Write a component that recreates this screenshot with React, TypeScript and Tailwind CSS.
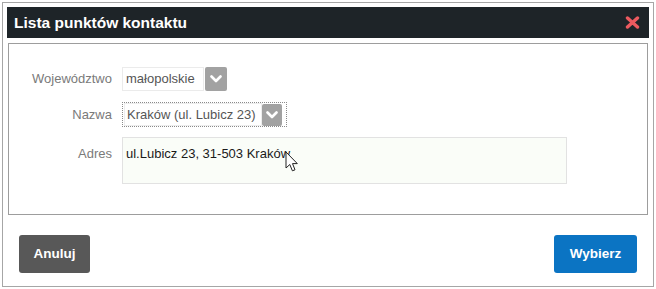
import React from 'react';

const Chevron: React.FC = () => (
  <svg width="12" height="8" viewBox="0 0 12 8" className="block">
    <path d="M1.5 1.5 L6 6 L10.5 1.5" fill="none" stroke="#ffffff" strokeWidth="2.6" strokeLinecap="round" strokeLinejoin="round" />
  </svg>
);

const DropButton: React.FC<{ className?: string }> = ({ className = '' }) => (
  <div className={`flex items-center justify-center bg-[#a2a2a2] rounded-[2px] ${className}`}>
    <Chevron />
  </div>
);

const Cursor: React.FC = () => (
  <svg width="14" height="22" viewBox="0 0 14 22" className="absolute left-[162px] top-[13px]">
    <path d="M1 1 L1 17 L4.8 13.5 L7.4 19.8 L10 18.8 L7.5 12.6 L12.3 12.6 Z" fill="#ffffff" stroke="#222222" strokeWidth="1" strokeLinejoin="round" />
  </svg>
);

const App: React.FC = () => {
  return (
    <div className="w-[656px] h-[289px] bg-white p-[2px] font-['Liberation_Sans',Arial,sans-serif]">
      <div className="h-full border border-[#a6a6a6] p-[4px] flex flex-col">
        {/* header */}
        <div className="h-[31px] bg-[#1e2428] flex items-center justify-between pl-[7px] pr-[9px]">
          <span className="text-white font-bold text-[15.5px] leading-none">Lista punktów kontaktu</span>
          <svg width="15" height="13" viewBox="0 0 15 13">
            <path d="M2.5 2 L12.5 11 M12.5 2 L2.5 11" stroke="#ec5a5f" strokeWidth="3.4" strokeLinecap="round" />
          </svg>
        </div>

        {/* body */}
        <div className="mt-[5px] mx-[1px] h-[172px] border border-[#9d9d9d] pt-[23px] text-[13px]">
          <div className="grid grid-cols-[103px_1fr] gap-x-[10px] items-center">
            <span className="text-right text-[#7a7a7a]">Województwo</span>
            <div className="flex h-[24px] items-stretch">
              <div className="w-[82px] border border-[#ebebeb] pl-[3px] flex items-center text-[#555555]">małopolskie</div>
              <DropButton className="w-[22px] ml-[1px]" />
            </div>

            <span className="mt-[11px] text-right text-[#7a7a7a]">Nazwa</span>
            <div className="mt-[11px] flex">
              <div className="h-[25px] w-[165px] border border-dotted border-[#8a8a8a] flex items-center pl-[1px] pr-[4px]">
                <div className="flex-1 h-[23px] border border-[#ededed] pl-[2px] flex items-center text-[#555555]">Kraków (ul. Lubicz 23)</div>
                <DropButton className="w-[20px] h-[22px]" />
              </div>
            </div>

            <span className="mt-[10px] self-start pt-[7px] text-right text-[#7a7a7a]">Adres</span>
            <div className="mt-[10px] relative w-[445px] h-[47px] border border-[#e2e2e2] bg-[#fafdf8] pl-[3px] pt-[6px] text-[#1a1a1a]">
              ul.Lubicz 23, 31-503 Kraków
              <Cursor />
            </div>
          </div>
        </div>

        {/* footer */}
        <div className="mt-[20px] flex justify-between pl-[12px] pr-[12px]">
          <button className="w-[71px] h-[38px] rounded-[3px] bg-[#585858] text-white font-bold text-[13.5px]">Anuluj</button>
          <button className="w-[83px] h-[38px] rounded-[3px] bg-[#0b74c3] text-white font-bold text-[13.5px]">Wybierz</button>
        </div>
      </div>
    </div>
  );
};

export default App;
